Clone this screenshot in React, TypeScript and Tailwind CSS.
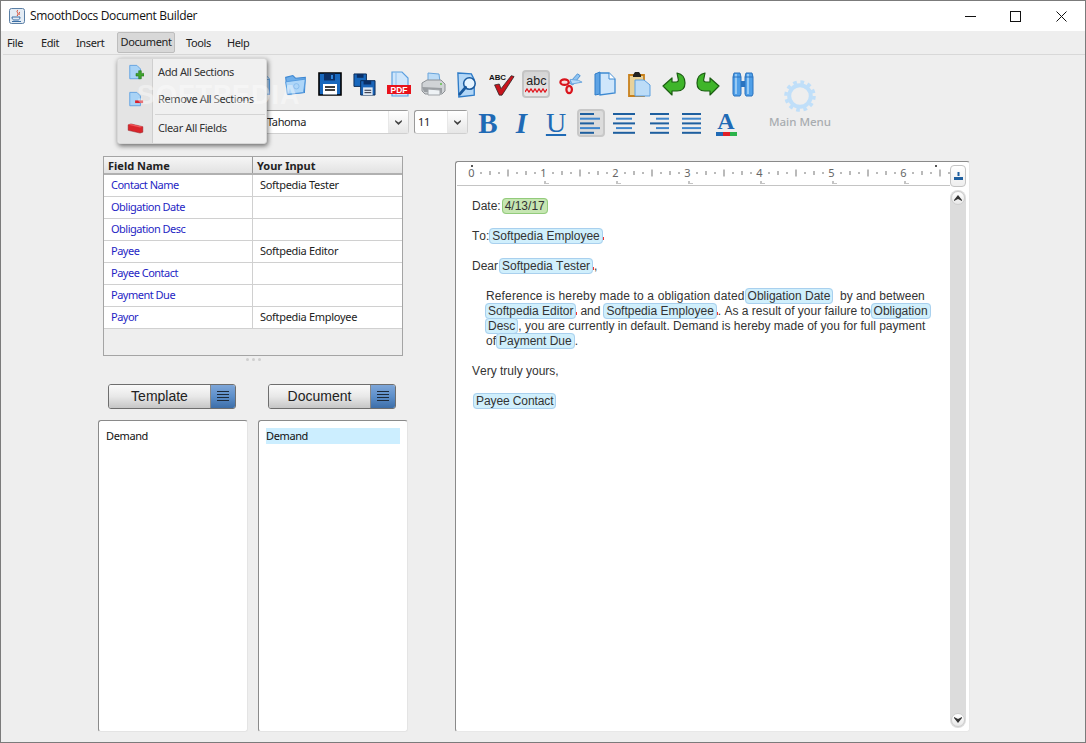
import React from "react";

const TAHOMA_PLAIN = "font-['Noto_Sans','DejaVu_Sans',sans-serif]";
const TAHOMA = "font-['Noto_Sans','DejaVu_Sans',sans-serif] tracking-[-0.38px]";

function Page({ c1 = "#cfe6fb", c2 = "#5b9fe0" }: { c1?: string; c2?: string }) {
  return <path d="M6 3h11l6 6v16H6z" fill={c1} stroke={c2} strokeWidth="1.5" strokeLinejoin="round" />;
}

const NewDoc = () => (
  <svg width="26" height="26" viewBox="0 0 28 28">
    <Page />
    <path d="M17 3v6h6" fill="#fff" stroke="#5b9fe0" />
  </svg>
);
const Folder = () => (
  <svg width="25" height="25" viewBox="0 0 28 28">
    <path d="M3 6l8-2 3 3 11-1-1 17-19 2z" fill="#6eaeea" stroke="#3f88d2" strokeWidth="1.2" />
    <path d="M3 11l22-3-2 15-18 2z" fill="#aed6f8" stroke="#4f97dc" />
    <circle cx="15" cy="16" r="3" fill="none" stroke="#86bbec" />
  </svg>
);
const Floppy = () => (
  <svg width="24" height="24" viewBox="0 0 24 24">
    <path d="M1 1h22v22H1z" fill="#1767bd" stroke="#000" strokeWidth="1.6" />
    <path d="M6 1.5h11v7H6z" fill="#0b2f66" />
    <path d="M13 3h2v4h-2z" fill="#2f86dc" />
    <path d="M5 12h14v10.5H5z" fill="#fff" />
    <path d="M7 15h10M7 18h10" stroke="#000" strokeWidth="1.4" />
  </svg>
);
const SaveAll = () => (
  <svg width="23" height="23" viewBox="0 0 24 24">
    <path d="M1 1h13v13H1z" fill="#1767bd" stroke="#0a2a55" />
    <path d="M4 1h7v4H4z" fill="#0b2f66" />
    <path d="M8 8h15v15H8z" fill="#1a64b8" stroke="#0a2a55" />
    <path d="M11 8h8v4h-8z" fill="#0b2f66" />
    <path d="M10.5 15h10v8h-10z" fill="#dfe9f4" />
    <path d="M12 18h7M12 20.5h7" stroke="#223" />
  </svg>
);
const Pdf = () => (
  <svg width="26" height="26" viewBox="0 0 26 26">
    <path d="M6 1h10l6 6v18H6z" fill="#cfe6fb" stroke="#5b9fe0" strokeWidth="1.2" />
    <path d="M10 1v24" stroke="#8fc0ee" />
    <path d="M1 14h24v9H1z" fill="#e8121b" />
    <text x="13" y="22" textAnchor="middle" fontSize="8.5" fontWeight="700" fill="#fff" fontFamily="Liberation Sans, sans-serif">PDF</text>
  </svg>
);
const Printer = () => (
  <svg width="26" height="26" viewBox="0 0 26 26">
    <path d="M8 2l11 1 1 8H8z" fill="#bcdcf7" stroke="#6aa5dc" />
    <path d="M2 12l5-3h14l4 4v7l-3 3H5l-3-3z" fill="#d0d3d6" stroke="#8d9195" />
    <path d="M2 16l20 1v5l-18-1z" fill="#9a9ea2" />
    <path d="M8 18l12 1v5H8z" fill="#eef2f5" stroke="#a0a4a8" />
    <circle cx="21" cy="13" r="1" fill="#62c04a" />
  </svg>
);
const Preview = () => (
  <svg width="25" height="27" viewBox="0 0 26 28">
    <path d="M3 2l14 1 3 6v16l-16 2z" fill="#b3d7f7" stroke="#2f7cc8" strokeWidth="1.4" />
    <circle cx="15" cy="13" r="6" fill="#e6f4ff" stroke="#1a5a9e" strokeWidth="1.6" />
    <path d="M11 17l-6 7" stroke="#1a5a9e" strokeWidth="3" strokeLinecap="round" />
  </svg>
);
const SpellCheck = () => (
  <svg width="26" height="26" viewBox="0 0 28 26">
    <text x="0" y="9" fontSize="8.5" fontWeight="700" fill="#111" fontFamily="Liberation Sans, sans-serif">ABC</text>
    <path d="M6 14l5-1 2 5L24 4l3 1-13 20h-3z" fill="#c8141c" stroke="#222" strokeWidth="0.8" strokeLinejoin="round" />
  </svg>
);
const AbcToggle = () => (
  <div className="w-[28px] h-[28px] rounded-[4px] border-2 border-[#c4c4c4] bg-gradient-to-b from-[#d4d4d4] to-[#e8e8e8] flex flex-col items-center justify-center">
    <span className="font-['Liberation_Sans',sans-serif] text-[12.5px] leading-[13px] text-[#222]">abc</span>
    <svg width="22" height="5" viewBox="0 0 22 5">
      <path d="M0 4l2-3 2 3 2-3 2 3 2-3 2 3 2-3 2 3 2-3 2 3 2-3" fill="none" stroke="#e2121a" strokeWidth="1.3" />
    </svg>
  </div>
);
const Scissors = () => (
  <svg width="24" height="24" viewBox="0 0 26 24">
    <path d="M11 11L20 1l3 2-8 10z" fill="#8fc4f2" stroke="#4b8fd0" />
    <path d="M12 7l9 1 4 2-11 2z" fill="#b9dcf9" stroke="#6aa5dc" />
    <ellipse cx="6" cy="10" rx="4.5" ry="3" fill="#f7dede" stroke="#d9141c" strokeWidth="2.4" />
    <ellipse cx="11" cy="18" rx="3" ry="4" fill="#f7dede" stroke="#d9141c" strokeWidth="2.4" />
  </svg>
);
const CopyIcon = () => (
  <svg width="24" height="26" viewBox="0 0 24 26">
    <path d="M2 3l5-2v22l-5 1z" fill="#5ea3e4" stroke="#2f7cc8" />
    <path d="M7 2h9l6 6v14l-15 2z" fill="#cfe6fb" stroke="#3e8ad2" strokeWidth="1.3" />
    <path d="M16 2v6h6" fill="#fff" stroke="#3e8ad2" />
  </svg>
);
const Paste = () => (
  <svg width="24" height="26" viewBox="0 0 24 26">
    <path d="M2 4h15v21H2z" fill="#e8d29a" stroke="#c8811d" strokeWidth="1.8" />
    <path d="M6 4l2-3h4l2 3v2H6z" fill="#222" />
    <path d="M8 9h9l6 5v11H8z" fill="#bcdcf7" stroke="#5b9fe0" />
  </svg>
);
const Undo = ({ flip = false }: { flip?: boolean }) => (
  <svg width="24" height="26" viewBox="0 0 24 26" className={flip ? "-scale-x-100" : ""}>
    <path d="M1 15l9-8v4h4c2 0 3-1 2-4l-1-5c5 1 8 5 8 10s-3 8-8 8h-5v4z" fill="#3fb52a" stroke="#1b5e12" strokeWidth="1.2" strokeLinejoin="round" />
  </svg>
);
const Binoculars = () => (
  <svg width="22" height="25" viewBox="0 0 22 25">
    <path d="M2 1h6l1 4v17l-1 2H2l-1-2V5z" fill="#4f9fe8" stroke="#2a73bf" />
    <path d="M14 1h6l1 4v17l-1 2h-6l-1-2V5z" fill="#4f9fe8" stroke="#2a73bf" />
    <path d="M9 9h4v6H9z" fill="#2a73bf" />
    <path d="M4 2v20M16 2v20" stroke="#b7dcfa" strokeWidth="1.4" />
    <path d="M1 5h8M13 5h8" stroke="#2a73bf" />
  </svg>
);

const AlignIcon = ({ lines }: { lines: [number, number][] }) => (
  <svg width="22" height="22" viewBox="0 0 22 22">
    {lines.map(([x, w], i) => (
      <rect key={i} x={x} y={1 + i * 4.7} width={w} height="2" fill={i % 2 ? "#3f86cc" : "#1e5f9f"} />
    ))}
  </svg>
);

const toolbar = [<NewDoc />, <Folder />, <Floppy />, <SaveAll />, <Pdf />, <Printer />, <Preview />, <SpellCheck />, <AbcToggle />, <Scissors />, <CopyIcon />, <Paste />, <Undo />, <Undo flip />, <Binoculars />];

function Combo({ width, text }: { width: string; text: string }) {
  return (
    <div className={`${width} h-[24px] shrink-0 self-start bg-white border border-[#d0d0d0] border-t-[#9a9a9a] border-l-[#9a9a9a] rounded-[3px] flex items-center ${TAHOMA} text-[11px] text-[#222]`}>
      <span className="flex-1 pl-[3px]">{text}</span>
      <span className="w-[20px] h-full border-l border-[#e8e8e8] bg-gradient-to-b from-white to-[#e6e6e6] flex items-center justify-center">
        <svg width="7" height="5" viewBox="0 0 8 6"><path d="M0 0l4 3 4-3v2L4 6 0 2z" fill="#444" /></svg>
      </span>
    </div>
  );
}

const rows = [
  ["Contact Name", "Softpedia Tester"],
  ["Obligation Date", ""],
  ["Obligation Desc", ""],
  ["Payee", "Softpedia Editor"],
  ["Payee Contact", ""],
  ["Payment Due", ""],
  ["Payor", "Softpedia Employee"],
];

function SplitButton({ label }: { label: string }) {
  return (
    <div className="w-[128px] h-[25px] flex rounded-[3px] border border-[#6e6e6e] overflow-hidden font-['Liberation_Sans',sans-serif] text-[14px] text-[#222]">
      <span className="flex-1 flex items-center justify-center bg-gradient-to-b from-[#fafafa] via-[#e8e8e8] to-[#c6c6c6] border-r border-[#888]">{label}</span>
      <span className="w-[24px] flex items-center justify-center bg-gradient-to-b from-[#7ea6d8] via-[#5d8fca] to-[#3d6ea8]">
        <svg width="12" height="11" viewBox="0 0 12 11">
          <path d="M0 .5h12M0 3.5h12M0 6.5h12M0 9.5h12" stroke="#1d2a3a" />
        </svg>
      </span>
    </div>
  );
}

function ListBox({ selected }: { selected?: boolean }) {
  return (
    <div className={`w-[150px] h-full bg-white border border-[#e4e4e4] border-t-[#8a8a8a] border-l-[#8a8a8a] rounded-[3px] px-[7px] pt-[7px] ${TAHOMA} text-[11px] text-[#111]`}>
      <div className={`h-[16px] leading-[16px] ${selected ? "bg-[#cceeff]" : ""}`}>Demand</div>
    </div>
  );
}

function Chip({ children, green, dot, className = "" }: { children: React.ReactNode; green?: boolean; dot?: boolean; className?: string }) {
  return (
    <>
      <span className={`border rounded-[4px] px-[2px] py-0 ${green ? "bg-[#c6e6b2] border-[#93cb7c]" : "bg-[#d0effc] border-[#a9d0ee]"} ${className}`}>{children}</span>
      {dot && <span className="inline-block w-px h-[3px] bg-[#e33] align-baseline" />}
    </>
  );
}

function Ruler() {
  const ticks = [];
  for (let i = 0; i <= 53; i++) {
    if (i % 8 === 0) continue;
    const x = 14.5 + i * 9;
    const h = i % 4 === 0 ? 7 : i % 2 === 0 ? 4 : 2;
    ticks.push(<rect key={i} x={x} y={11 - h / 2} width="1" height={h} fill="#777" />);
  }
  return (
    <svg width="493" height="24" viewBox="0 0 493 24" className="block">
      <rect x="14" y="3" width="2" height="2" fill="#555" />
      <rect x="478" y="3" width="2" height="2" fill="#555" />
      {ticks}
      {[0, 1, 2, 3, 4, 5, 6].map((n) => (
        <g key={n}>
          <text x={14.5 + n * 72} y="15" textAnchor="middle" fontSize="11" fill="#666" fontFamily="Noto Sans, sans-serif">{n}</text>
          {n > 0 && <path d={`M${15 + n * 72} 19h2v2h3v1h-5z`} fill="#c4c4c4" />}
        </g>
      ))}
    </svg>
  );
}

const ScrollBtn = ({ up }: { up?: boolean }) => (
  <span className="w-[14px] h-[14px] rounded-full bg-gradient-to-b from-white to-[#e8e8e8] border border-[#cfcfcf] flex items-center justify-center">
    <svg width="8" height="6" viewBox="0 0 8 6" className={up ? "rotate-180" : ""}><path d="M0 0l4 2 4-2v1L4 6 0 1z" fill="#333" /></svg>
  </span>
);

function MenuItem({ icon, label }: { icon: React.ReactNode; label: string }) {
  return (
    <div className="h-[27px] flex items-center">
      <span className="w-[35px] flex justify-center">{icon}</span>
      <span className="ml-[5px]">{label}</span>
    </div>
  );
}

export default function App() {
  return (
    <div className="relative w-[1086px] h-[743px] border border-[#7b7b7b] bg-[#eeeeee] flex flex-col overflow-hidden">
      {/* title bar */}
      <div className="h-[30px] bg-white flex items-center shrink-0">
        <svg width="16" height="16" viewBox="0 0 16 16" className="ml-[8px]">
          <rect x="0.5" y="0.5" width="15" height="15" rx="2" fill="#e4ecf4" stroke="#5a7fa5" />
          <path d="M9 2c-3 2 2 3-1 6M11 4c-2 1 0 2-1 3" stroke="#d8472b" fill="none" />
          <path d="M3 9h8c0 2-1 3-2 3H5c-1 0-2-1-2-3zM3 13.5h9" stroke="#3a6ea5" fill="none" />
        </svg>
        <span className="ml-[5px] font-['Open_Sans',sans-serif] text-[12px] tracking-[-0.33px] text-[#111]">SmoothDocs Document Builder</span>
        <div className="ml-auto flex items-center">
          <svg width="11" height="11" viewBox="0 0 11 11" className="mr-[34px]"><path d="M0 5.5h11" stroke="#111" /></svg>
          <svg width="11" height="11" viewBox="0 0 11 11" className="mr-[35px]"><rect x=".5" y=".5" width="10" height="10" fill="none" stroke="#111" /></svg>
          <svg width="11" height="11" viewBox="0 0 11 11" className="mr-[18px]"><path d="M.5.5l10 10M10.5.5l-10 10" stroke="#111" /></svg>
        </div>
      </div>

      {/* menu bar */}
      <div className={`h-[24px] shrink-0 flex items-center pl-[2px] ml-[2px] pt-[1px] border-b border-[#d8d8d8] ${TAHOMA} text-[11px] text-[#222]`}>
        <span className="w-[34px] pl-[2px] shrink-0">File</span>
        <span className="w-[35px] pl-[2px] shrink-0">Edit</span>
        <span className="w-[43px] pl-[2px] shrink-0">Insert</span>
        <span className="w-[58px] h-[21px] -mt-[1px] shrink-0 flex items-center justify-center rounded-[2px] bg-[#d8d8d8] border border-[#bdbdbd]">Document</span>
        <span className="w-[41px] pl-[11px] box-content shrink-0">Tools</span>
        <span className="shrink-0">Help</span>
      </div>

      {/* toolbar row 1 */}
      <div className="mt-[15px] ml-[243px] h-[28px] flex shrink-0 items-center">
        {toolbar.map((ic, i) => (
          <span key={i} className="w-[34.4px] h-[28px] flex items-center justify-center">{ic}</span>
        ))}
      </div>

      {/* toolbar row 2 */}
      <div className="mt-[12px] h-[26px] ml-[250px] flex items-center shrink-0 relative">
        <Combo width="w-[158px]" text="" />
        <span className="w-[5px] shrink-0" />
        <Combo width="w-[54px]" text="11" />
        <span className="w-[40px] shrink-0 text-center font-['Liberation_Serif',serif] text-[#1f6ab5] font-bold text-[29px] leading-[26px]">B</span>
        <span className="w-[27px] shrink-0 text-center font-['Liberation_Serif',serif] text-[#1f6ab5] font-bold italic text-[29px] leading-[26px]">I</span>
        <span className="w-[42px] shrink-0 text-center font-['Liberation_Serif',serif] text-[#1f6ab5] underline decoration-2 underline-offset-[2px] text-[28px] leading-[26px]">U</span>
        <span className="w-[28px] h-[28px] shrink-0 flex items-center justify-center rounded-[4px] border-2 border-[#c8c8c8] bg-[#dcdcdc]">
          <AlignIcon lines={[[0, 14], [0, 20], [0, 14], [0, 20], [0, 14]]} />
        </span>
        <span className="w-[38px] shrink-0 flex justify-center"><AlignIcon lines={[[0, 22], [3, 16], [0, 22], [3, 16], [0, 22]]} /></span>
        <span className="w-[30px] shrink-0 flex justify-center"><AlignIcon lines={[[3, 19], [9, 13], [3, 19], [9, 13], [3, 19]]} /></span>
        <span className="w-[38px] shrink-0 flex justify-center"><AlignIcon lines={[[1, 19], [1, 19], [1, 19], [1, 19], [1, 19]]} /></span>
        <span className="w-[30px] shrink-0 flex flex-col items-center">
          <span className="font-['Liberation_Serif',serif] font-bold text-[#1f6ab5] text-[24px] leading-[22px]">A</span>
          <span className="flex h-[4px] w-[21px]">
            <span className="flex-1 bg-[#1f6ab5]" />
            <span className="flex-1 bg-[#e01f26]" />
            <span className="flex-1 bg-[#2bb34a]" />
          </span>
        </span>
      </div>

      {/* Main menu action */}
      <div className={`absolute left-[769px] top-[79px] w-[60px] flex flex-col items-center ${TAHOMA_PLAIN} text-[11.5px] text-[#a8acb0]`}>
        <svg width="32" height="32" viewBox="0 0 32 32">
          <circle cx="16" cy="16" r="14" fill="none" stroke="#c0dff9" strokeWidth="3.5" strokeDasharray="3.7 3.63" />
          <circle cx="16" cy="16" r="10.8" fill="none" stroke="#c0dff9" strokeWidth="4" />
        </svg>
        <span className="leading-[16px] mt-[2px] font-medium whitespace-nowrap">Main Menu</span>
      </div>

      {/* main */}
      <div className="flex-1 min-h-0 mt-[20px] pb-[10px] flex">
        {/* left column */}
        <div className="ml-[97px] w-[310px] flex flex-col">
          <div className={`ml-[5px] w-[300px] h-[200px] border border-[#a4a4a4] ${TAHOMA_PLAIN} text-[11px]`}>
            <div className="h-[18px] flex border-b-2 border-[#b0b0b0] bg-gradient-to-b from-[#f6f6f6] to-[#e2e2e2] font-bold text-[#222] leading-[18px]">
              <span className="w-[149px] pl-[4px] border-r border-[#999]">Field Name</span>
              <span className="pl-[4px]">Your Input</span>
            </div>
            {rows.map(([a, b]) => (
              <div key={a} className="h-[22px] flex bg-white border-b border-[#d0d0d0] leading-[20px]">
                <span className="w-[149px] pl-[7px] border-r border-[#d0d0d0] text-[#1f1fc4] tracking-[-0.5px]">{a}</span>
                <span className="pl-[7px] text-[#222] tracking-[-0.3px]">{b}</span>
              </div>
            ))}
          </div>
          <div className="h-[28px] flex justify-center gap-[3px] pt-[2px]">
            <span className="w-[3px] h-[3px] rounded-full bg-[#cfcfcf]" />
            <span className="w-[3px] h-[3px] rounded-full bg-[#cfcfcf]" />
            <span className="w-[3px] h-[3px] rounded-full bg-[#cfcfcf]" />
          </div>
          <div className="ml-[10px] flex gap-[32px]">
            <SplitButton label="Template" />
            <SplitButton label="Document" />
          </div>
          <div className="mt-[11px] flex-1 min-h-0 flex gap-[10px]">
            <ListBox />
            <ListBox selected />
          </div>
        </div>

        {/* editor */}
        <div className="ml-[47px] mt-[5px] w-[515px] bg-white border border-[#e8e8e8] border-t-[#8a8a8a] border-l-[#8a8a8a] rounded-[3px] flex">
          <div className="w-[494px] flex flex-col">
            <div className="h-[24px] border-b border-[#c4c4c4] ml-px"><Ruler /></div>
            <div className="pt-[13px] pl-[16px] font-['Liberation_Sans',sans-serif] text-[12px] [font-kerning:none] leading-[15px] text-[#333] whitespace-nowrap">
              <p className="mb-[15px]">Date:<Chip green className="ml-px">4/13/17</Chip></p>
              <p className="mb-[15px]">To:<Chip dot>Softpedia Employee</Chip></p>
              <p className="mb-[15px]">Dear<Chip dot className="ml-px">Softpedia Tester</Chip>,</p>
              <div className="mb-[15px] pl-[14px]">
                <p><span className="tracking-[0.14px]">Reference is hereby made to a obligation dated</span><Chip>Obligation Date</Chip>&nbsp; by and between</p>
                <p><Chip dot className="-ml-px">Softpedia Editor</Chip><span className="ml-[3px] mr-[3px]">and</span><Chip dot>Softpedia Employee</Chip><span>. As a result of your failure to</span><Chip>Obligation</Chip></p>
                <p><Chip className="-ml-px">Desc</Chip>, you are currently in default. Demand is hereby made of you for full payment</p>
                <p>of<Chip>Payment Due</Chip>.</p>
              </div>
              <p className="mb-[15px]">Very truly yours,</p>
              <p className="pl-[1px]"><Chip className="tracking-[-0.1px]">Payee Contact</Chip></p>
            </div>
          </div>
          <div className="w-[16px] flex flex-col pt-[3px] pb-[3px]">
            <span className="h-[22px] rounded-[4px] border border-[#c4c4c4] bg-gradient-to-b from-white to-[#eeeeee] flex items-center justify-center">
              <svg width="9" height="8" viewBox="0 0 9 8"><path d="M3.5 0h2v4h-2zM0 5h9v3H0z" fill="#1f5f9f" /></svg>
            </span>
            <div className="mt-[3px] flex-1 min-h-0 rounded-full bg-[#dcdcdc] flex flex-col items-center justify-between py-px">
              <ScrollBtn up />
              <ScrollBtn />
            </div>
          </div>
        </div>
      </div>

      {/* Tahoma text of the font combo, popup and watermark */}
      <span className={`absolute left-[266px] top-[114px] ${TAHOMA} text-[11px] leading-[14px] text-[#222]`}>Tahoma</span>

      <div className={`absolute left-[116px] top-[57px] w-[150px] h-[86px] bg-[#f0f0f0] rounded-[3px] border border-[#d8d8d8] shadow-[1px_2px_5px_rgba(0,0,0,0.55)] ${TAHOMA} text-[11px] text-[#333]`}>
        <span className="absolute left-0 top-0 bottom-0 w-[35px] bg-[#e4e4e4] border-r border-[#cfcfcf] rounded-l-[3px]" />
        <div className="relative">
          <MenuItem label="Add All Sections" icon={
            <svg width="16" height="17" viewBox="0 0 18 18">
              <path d="M2 1h8l4 4v11H2z" fill="#a9d3f6" stroke="#5b9fe0" />
              <path d="M9 10h3V7h3v3h3v3h-3v3h-3v-3H9z" fill="#3fa52c" stroke="#1f6a14" strokeWidth=".6" />
            </svg>
          } />
          <MenuItem label="Remove All Sections" icon={
            <svg width="16" height="17" viewBox="0 0 18 18">
              <path d="M2 1h8l4 4v11H2z" fill="#a9d3f6" stroke="#5b9fe0" />
              <rect x="8" y="10" width="9" height="3" fill="#d92128" />
            </svg>
          } />
          <div className="h-px bg-[#d4d4d4] ml-[37px] mr-[1px] mt-[1px]" />
          <MenuItem label="Clear All Fields" icon={
            <svg width="17" height="11" viewBox="0 0 18 12">
              <path d="M1 2l3-1 13 3v6l-3 1L1 8z" fill="#d9252b" stroke="#8a1216" strokeWidth=".5" />
              <path d="M1 2l3-1 13 3-3 1z" fill="#f0585c" />
            </svg>
          } />
        </div>
      </div>

      <span className="absolute left-[136px] top-[79px] font-['Liberation_Sans',sans-serif] font-bold text-[27px] leading-[30px] tracking-[1px] text-white/40 pointer-events-none">SOFTPEDIA</span>
    </div>
  );
}
